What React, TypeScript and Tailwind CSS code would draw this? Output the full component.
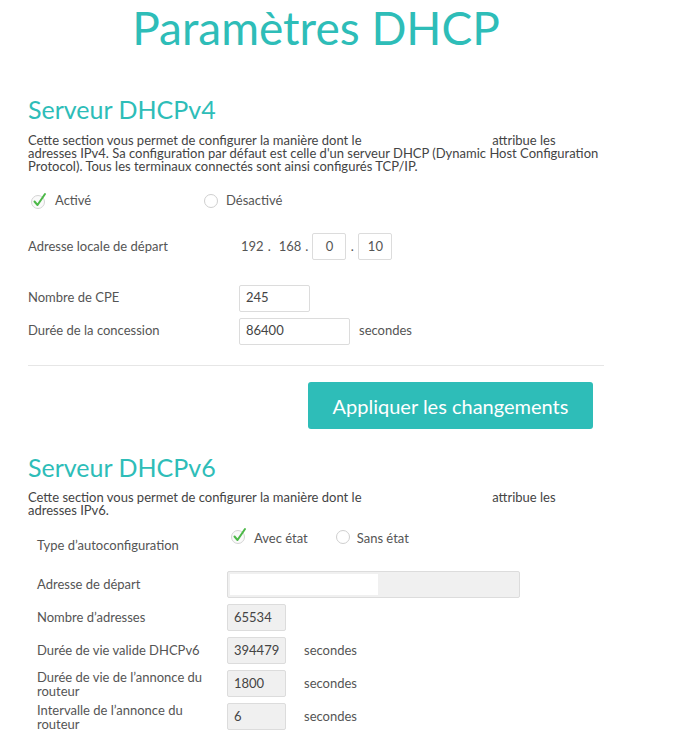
import React from "react";

const teal = "text-[#2ebdb8]";

function CheckMark() {
  return (
    <svg width="18" height="18" viewBox="0 0 18 18" className="shrink-0">
      <circle cx="8" cy="10" r="6.5" fill="#fafafa" stroke="#d4d4d4" strokeWidth="1" />
      <path d="M4.5 9.5 L7.5 13 L15 2" fill="none" stroke="#4cb848" strokeWidth="2" strokeLinecap="round" strokeLinejoin="round" />
    </svg>
  );
}

function Radio() {
  return <span className="inline-block w-[14px] h-[14px] rounded-full border border-[#cfcfcf] bg-white shrink-0" />;
}

function Box({ w, value, grey }: { w: string; value?: string; grey?: boolean }) {
  return (
    <div
      className={`${w} h-[27px] flex items-center px-[6px] text-[13px] text-[#444] border border-[#dcdcdc] rounded-[2px] ${
        grey ? "bg-[#f0f0f0]" : "bg-white"
      }`}
    >
      {value}
    </div>
  );
}

function V6Row({ label, value, unit, twoLines }: { label: string; value: string; unit?: boolean; twoLines?: boolean }) {
  return (
    <div className="flex items-center h-[27px]">
      <div className={`w-[190px] pr-[20px] text-[13px] text-[#555] ${twoLines ? "leading-[14px]" : ""}`}>{label}</div>
      <Box w="w-[59px]" value={value} grey />
      {unit && <span className="ml-[18px] text-[13px] text-[#555]">secondes</span>}
    </div>
  );
}

export default function App() {
  return (
    <div className="bg-white min-h-[750px] font-['Lato','Open_Sans',sans-serif]">
      <div className="w-[576px] ml-[28px]">
        <h1 className={`text-[46px] leading-[56px] text-center ${teal}`}>Paramètres DHCP</h1>

        {/* DHCPv4 */}
        <h2 className={`mt-[38px] text-[25px] leading-[30px] ${teal}`}>Serveur DHCPv4</h2>
        <p className="mt-[10px] w-[600px] text-[13px] leading-[13px] text-[#444] whitespace-nowrap">
          Cette section vous permet de configurer la manière dont le <span className="inline-block w-[124px]" /> attribue les
          <br />
          adresses IPv4. Sa configuration par défaut est celle d'un serveur DHCP (Dynamic Host Configuration
          <br />
          Protocol). Tous les terminaux connectés sont ainsi configurés TCP/IP.
        </p>

        <div className="mt-[18px] h-[20px] flex items-center text-[13px] text-[#555]">
          <div className="w-[176px] flex items-center gap-[7px] pl-[2px]">
            <CheckMark />
            <span>Activé</span>
          </div>
          <div className="flex items-center gap-[8px]">
            <Radio />
            <span>Désactivé</span>
          </div>
        </div>

        <div className="mt-[22px] h-[27px] flex items-center text-[13px] text-[#555]">
          <div className="w-[213px]">Adresse locale de départ</div>
          <span>192</span>
          <span className="ml-[4px]">.</span>
          <span className="ml-[8px]">168</span>
          <span className="ml-[4px] mr-[4px]">.</span>
          <div className="w-[34px] h-[27px] flex items-center justify-center border border-[#dcdcdc] rounded-[2px]">0</div>
          <span className="w-[12px] text-center">.</span>
          <div className="w-[34px] h-[27px] flex items-center justify-center border border-[#dcdcdc] rounded-[2px]">10</div>
        </div>

        <div className="mt-[25px] h-[26px] flex items-center text-[13px] text-[#555]">
          <div className="w-[211px]">Nombre de CPE</div>
          <Box w="w-[71px]" value="245" />
        </div>
        <div className="mt-[7px] h-[26px] flex items-center text-[13px] text-[#555]">
          <div className="w-[211px]">Durée de la concession</div>
          <Box w="w-[111px]" value="86400" />
          <span className="ml-[9px]">secondes</span>
        </div>

        <div className="mt-[21px] border-t border-[#e6e6e6]" />

        <div className="mt-[16px] flex justify-end pr-[11px]">
          <button className="w-[285px] h-[47px] rounded-[3px] bg-[#2ebdb8] text-white text-[20px]">
            Appliquer les changements
          </button>
        </div>

        {/* DHCPv6 */}
        <h2 className={`mt-[23px] text-[25px] leading-[30px] ${teal}`}>Serveur DHCPv6</h2>
        <p className="mt-[9px] w-[600px] text-[13px] leading-[13px] text-[#444] whitespace-nowrap">
          Cette section vous permet de configurer la manière dont le <span className="inline-block w-[124px]" /> attribue les
          <br />
          adresses IPv6.
        </p>

        <div className="ml-[9px]">
          <div className="mt-[6px] h-[34px] flex text-[13px] text-[#555]">
            <div className="w-[193px] self-end pb-[2px]">Type d’autoconfiguration</div>
            <div className="flex items-start gap-[6px] pt-[4px]">
              <CheckMark />
              <span className="mt-[2px]">Avec état</span>
            </div>
            <div className="ml-[28px] flex items-start gap-[7px] pt-[7px]">
              <Radio />
              <span className="-mt-[1px]">Sans état</span>
            </div>
          </div>

          <div className="mt-[14px] flex flex-col gap-[6px]">
            <div className="flex items-center h-[27px]">
              <div className="w-[190px] text-[13px] text-[#555]">Adresse de départ</div>
              <div className="w-[293px] h-[27px] bg-[#f0f0f0] border border-[#dcdcdc] rounded-[2px] p-[2px]">
                <div className="w-[148px] h-full bg-white" />
              </div>
            </div>
            <V6Row label="Nombre d’adresses" value="65534" />
            <V6Row label="Durée de vie valide DHCPv6" value="394479" unit />
            <V6Row label="Durée de vie de l’annonce du routeur" value="1800" unit twoLines />
            <V6Row label="Intervalle de l’annonce du routeur" value="6" unit twoLines />
          </div>
        </div>
      </div>
    </div>
  );
}
